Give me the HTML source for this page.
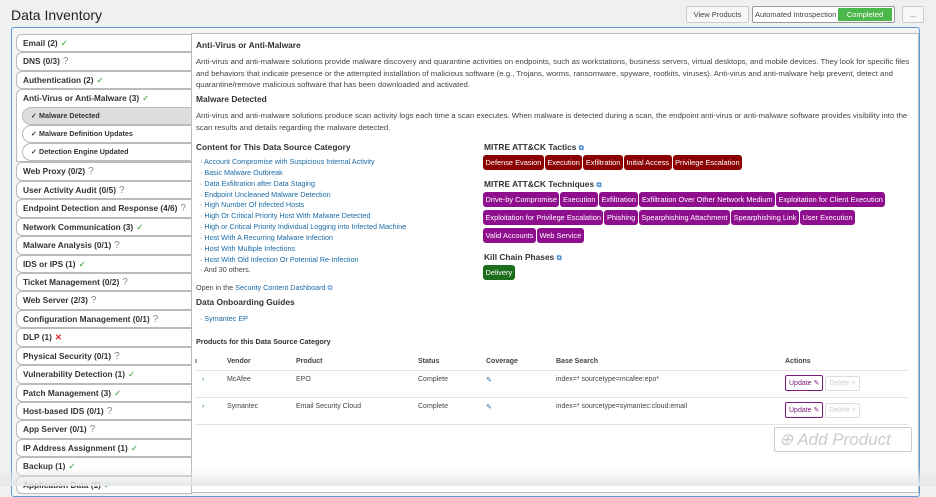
<!DOCTYPE html><html><head><style>
*{box-sizing:border-box;margin:0;padding:0}
body{width:936px;height:486px;overflow:hidden;background:#eef0f2;font-family:"Liberation Sans",sans-serif;color:#333;position:relative}
.title{position:absolute;left:11px;top:7px;font-size:14px;color:#222}
.btn{position:absolute;top:6px;height:17px;border:1px solid #ccc;background:#f7f7f7;font-size:7.5px;line-height:15px;text-align:center;border-radius:2px;color:#444}
.panel{position:absolute;left:11px;top:27px;width:909px;height:470px;border:1px solid #5d9ad6;background:#f4f4f4;border-radius:3px}
.tabs{position:absolute;left:16px;top:34px;width:176px}
.tab{height:18.45px;border:1px solid #bbb;border-right:none;border-radius:6px 0 0 6px;background:#fff;font-size:8.3px;font-weight:bold;line-height:17px;padding-left:6px;color:#333;white-space:nowrap}
.sub{height:18px;margin-left:5px;border:1px solid #bbb;border-right:none;border-radius:9px 0 0 9px;background:#fff;font-size:7.2px;font-weight:bold;line-height:16px;padding-left:8px}
.sub.sel{background:#ddd}
.ok{color:#2a9a2a;font-weight:normal;margin-left:3px}
.q{color:#888;font-weight:normal;font-size:10px;margin-left:3px}
.x{color:#d9262b;margin-left:3px}
.content{position:absolute;left:191px;top:33px;width:728px;height:460px;background:#fff;border:1px solid #bbb;font-size:7.2px;color:#444}
.abs{position:absolute}
h4{font-size:8.4px;color:#333;font-weight:bold}
p.d{line-height:11.6px;font-size:7.75px}
ul{list-style:none}
li{line-height:10.85px;color:#1a6aa6}
li:before{content:"· ";color:#444}
.tag{display:inline-block;color:#fff;font-size:7.4px;padding:0 2.5px;height:15px;line-height:15px;border-radius:3px;margin:0 1px 3px 0}
.r{background:#8b0000}.p{background:#8e0e8e}.g{background:#1c6e1c}
.lnk{color:#3a85c9;font-size:7px}
table{border-collapse:collapse;position:absolute;left:3px;top:320px;width:713px;font-size:7px}
th{text-align:left;font-weight:bold;height:16px;border-bottom:1px solid #e4e4e4}
td{height:27px;border-bottom:1px solid #e4e4e4;vertical-align:top;padding-top:5px}
.up{display:inline-block;border:1px solid #7a1a7a;color:#7a1a7a;border-radius:2px;padding:3px 3px;margin-top:-2px}
.dl{display:inline-block;border:1px solid #ddd;color:#ccc;border-radius:2px;padding:3px 3px;margin-left:2px}
</style></head><body>
<div class="title">Data Inventory</div>
<div class="btn" style="left:686px;width:63px">View Products</div>
<div class="btn" style="left:752px;width:143px;text-align:left;padding-left:2px;background:#fff;border-color:#999">Automated Introspection<span style="position:absolute;right:2px;top:1px;width:54px;height:13px;background:#4cb84c;color:#fff;line-height:13px;text-align:center">Completed</span></div>
<div class="btn" style="left:902px;width:22px">...</div>
<div class="panel"></div>
<div class="tabs">
<div class="tab">Email (2)<span class="ok">✓</span></div>
<div class="tab">DNS (0/3)<span class="q">?</span></div>
<div class="tab">Authentication (2)<span class="ok">✓</span></div>
<div class="tab" style="height:73px;border-radius:6px 0 0 0">Anti-Virus or Anti-Malware (3)<span class="ok">✓</span>
<div class="sub sel" style="margin-left:-1px">✓ Malware Detected</div>
<div class="sub" style="margin-left:-1px">✓ Malware Definition Updates</div>
<div class="sub" style="margin-left:-1px">✓ Detection Engine Updated</div></div>
<div class="tab">Web Proxy (0/2)<span class="q">?</span></div>
<div class="tab">User Activity Audit (0/5)<span class="q">?</span></div>
<div class="tab">Endpoint Detection and Response (4/6)<span class="q">?</span></div>
<div class="tab">Network Communication (3)<span class="ok">✓</span></div>
<div class="tab">Malware Analysis (0/1)<span class="q">?</span></div>
<div class="tab">IDS or IPS (1)<span class="ok">✓</span></div>
<div class="tab">Ticket Management (0/2)<span class="q">?</span></div>
<div class="tab">Web Server (2/3)<span class="q">?</span></div>
<div class="tab">Configuration Management (0/1)<span class="q">?</span></div>
<div class="tab">DLP (1)<span class="x">✕</span></div>
<div class="tab">Physical Security (0/1)<span class="q">?</span></div>
<div class="tab">Vulnerability Detection (1)<span class="ok">✓</span></div>
<div class="tab">Patch Management (3)<span class="ok">✓</span></div>
<div class="tab">Host-based IDS (0/1)<span class="q">?</span></div>
<div class="tab">App Server (0/1)<span class="q">?</span></div>
<div class="tab">IP Address Assignment (1)<span class="ok">✓</span></div>
<div class="tab">Backup (1)<span class="ok">✓</span></div>
<div class="tab">Application Data (1)<span class="ok">✓</span></div>
</div>
<div class="content">
<h4 class="abs" style="left:4px;top:6px">Anti-Virus or Anti-Malware</h4>
<p class="d abs" style="left:4px;top:22px;width:722px">Anti-virus and anti-malware solutions provide malware discovery and quarantine activities on endpoints, such as workstations, business servers, virtual desktops, and mobile devices. They look for specific files and behaviors that indicate presence or the attempted installation of malicious software (e.g., Trojans, worms, ransomware, spyware, rootkits, viruses). Anti-virus and anti-malware help prevent, detect and quarantine/remove malicious software that has been downloaded and activated.</p>
<h4 class="abs" style="left:4px;top:60px">Malware Detected</h4>
<p class="d abs" style="left:4px;top:76px;width:722px">Anti-virus and anti-malware solutions produce scan activity logs each time a scan executes. When malware is detected during a scan, the endpoint anti-virus or anti-malware software provides visibility into the scan results and details regarding the malware detected.</p>
<h4 class="abs" style="left:4px;top:108px">Content for This Data Source Category</h4>
<ul class="abs" style="left:8px;top:123px">
<li>Account Compromise with Suspicious Internal Activity</li><li>Basic Malware Outbreak</li><li>Data Exfiltration after Data Staging</li><li>Endpoint Uncleaned Malware Detection</li><li>High Number Of Infected Hosts</li><li>High Or Critical Priority Host With Malware Detected</li><li>High or Critical Priority Individual Logging into Infected Machine</li><li>Host With A Recurring Malware Infection</li><li>Host With Multiple Infections</li><li>Host With Old Infection Or Potential Re-Infection</li><li style="color:#444">And 30 others.</li></ul>
<div class="abs" style="left:4px;top:249px">Open in the <span style="color:#1a6aa6">Security Content Dashboard</span> <span class="lnk">⧉</span></div>
<h4 class="abs" style="left:4px;top:263px">Data Onboarding Guides</h4>
<ul class="abs" style="left:8px;top:280px"><li>Symantec EP</li></ul>
<div class="abs" style="left:4px;top:303px;font-weight:bold;color:#333">Products for this Data Source Category</div>
<h4 class="abs" style="left:292px;top:108px">MITRE ATT&amp;CK Tactics <span class="lnk">⧉</span></h4>
<div class="abs" style="left:291px;top:121px;width:430px"><span class="tag r">Defense Evasion</span><span class="tag r">Execution</span><span class="tag r">Exfiltration</span><span class="tag r">Initial Access</span><span class="tag r">Privilege Escalation</span></div>
<h4 class="abs" style="left:292px;top:145px">MITRE ATT&amp;CK Techniques <span class="lnk">⧉</span></h4>
<div class="abs" style="left:291px;top:158px;width:418px"><span class="tag p">Drive-by Compromise</span><span class="tag p">Execution</span><span class="tag p">Exfiltration</span><span class="tag p">Exfiltration Over Other Network Medium</span><span class="tag p">Exploitation for Client Execution</span><span class="tag p">Exploitation for Privilege Escalation</span><span class="tag p">Phishing</span><span class="tag p">Spearphishing Attachment</span><span class="tag p">Spearphishing Link</span><span class="tag p">User Execution</span><span class="tag p">Valid Accounts</span><span class="tag p">Web Service</span></div>
<h4 class="abs" style="left:292px;top:218px">Kill Chain Phases <span class="lnk">⧉</span></h4>
<div class="abs" style="left:291px;top:231px"><span class="tag g">Delivery</span></div>
<table>
<tr><th style="width:32px">ı</th><th style="width:69px">Vendor</th><th style="width:122px">Product</th><th style="width:68px">Status</th><th style="width:70px">Coverage</th><th style="width:229px">Base Search</th><th>Actions</th></tr>
<tr><td style="color:#1a6aa6;padding-left:7px">›</td><td>McAfee</td><td>EPO</td><td>Complete</td><td style="color:#1a6aa6">✎</td><td>index=* sourcetype=mcafee:epo*</td><td><span class="up">Update ✎</span><span class="dl">Delete ×</span></td></tr>
<tr><td style="color:#1a6aa6;padding-left:7px">›</td><td>Symantec</td><td>Email Security Cloud</td><td>Complete</td><td style="color:#1a6aa6">✎</td><td>index=* sourcetype=symantec:cloud:email</td><td><span class="up">Update ✎</span><span class="dl">Delete ×</span></td></tr>
</table>
<div class="abs" style="left:582px;top:393px;width:138px;height:25px;border:1px solid #ccc;border-radius:2px;color:#ccc;font-size:17px;font-style:italic;line-height:23px;padding-left:4px">⊕ Add Product</div>
</div>
<div style="position:absolute;left:0;top:468px;width:936px;height:18px;background:linear-gradient(#fff0,#e8e8e8)"></div>
</body></html>
